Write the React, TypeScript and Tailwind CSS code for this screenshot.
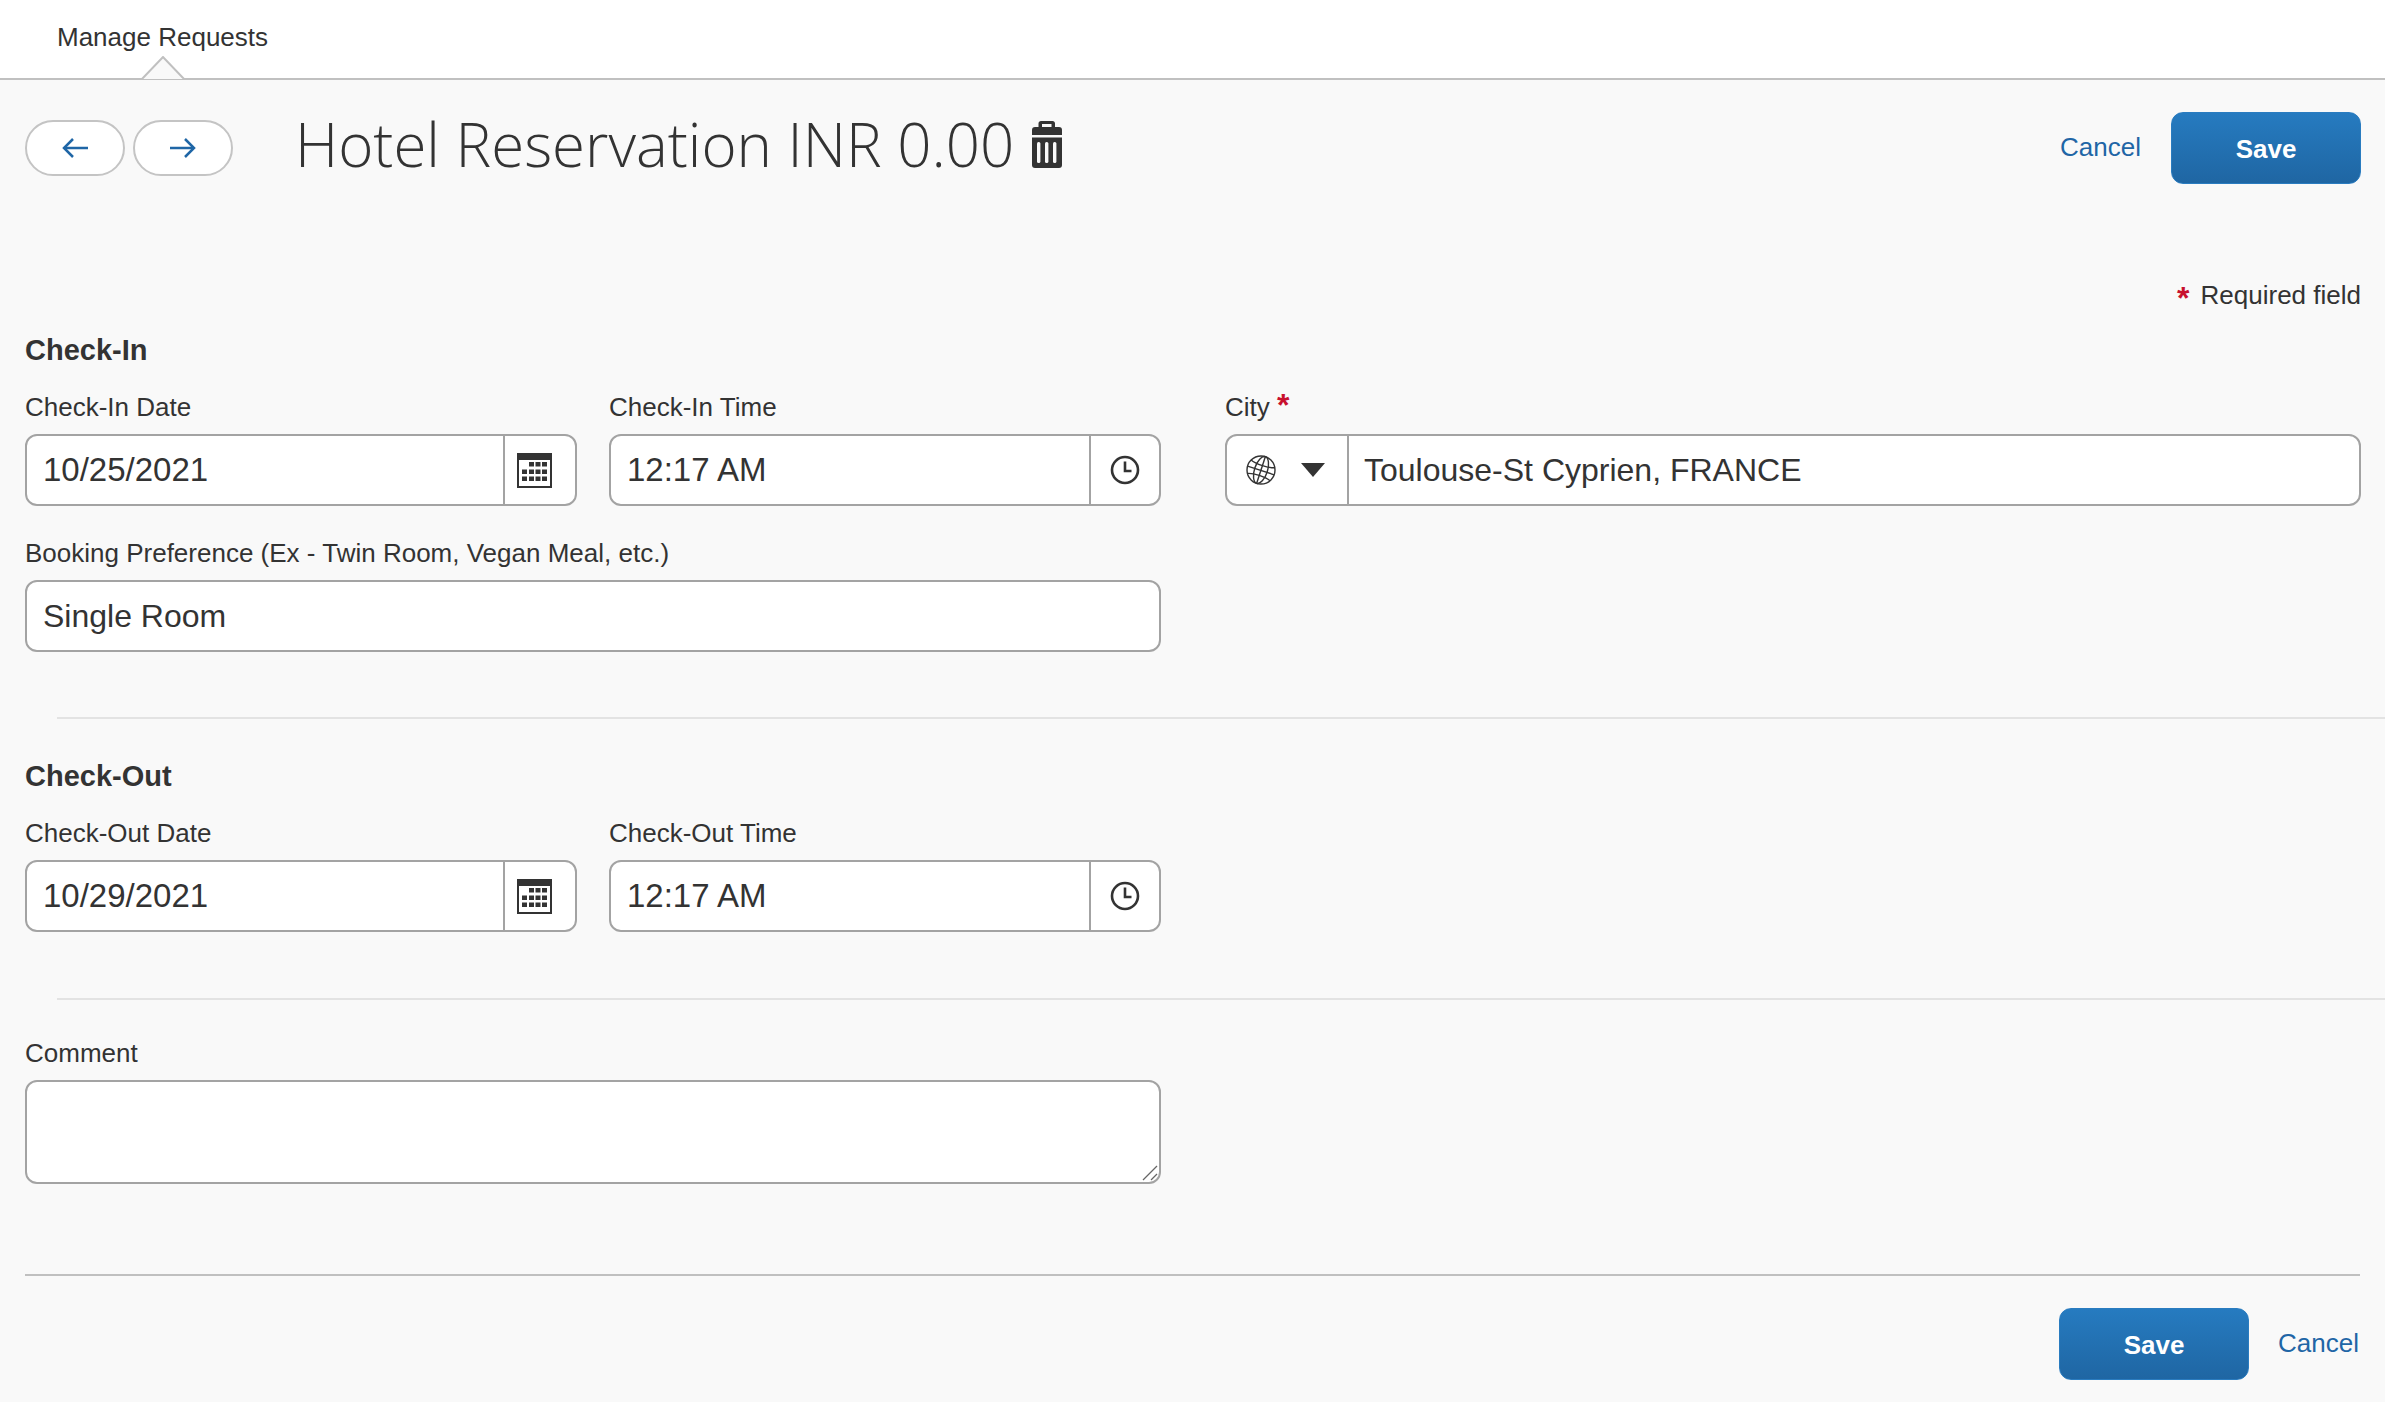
import { ReactNode } from "react";

const sans = "font-['Liberation_Sans',Arial,sans-serif]";

function CalendarIcon() {
  return (
    <svg width="35" height="35" viewBox="0 0 35 35" className="block">
      <rect x="0" y="0" width="35" height="35" fill="#333" />
      <rect x="2" y="7" width="31" height="26" fill="#fff" />
      {[9, 16.500, 23.500].map((y) =>
        [5, 12, 18.500, 25].map((x) =>
          y === 9 && x === 5 ? null : <rect key={`${x}-${y}`} x={x} y={y} width="5" height="4.500" fill="#333" />
        )
      )}
    </svg>
  );
}

function ClockIcon() {
  return (
    <svg width="30" height="30" viewBox="0 0 30 30" className="block">
      <circle cx="15" cy="15" r="13" fill="none" stroke="#333" strokeWidth="2.600" />
      <path d="M15 6.500V16H21.500" fill="none" stroke="#333" strokeWidth="2.600" />
    </svg>
  );
}

function GlobeIcon() {
  return (
    <svg width="30" height="30" viewBox="0 0 30 30" className="block" fill="none" stroke="#333" strokeWidth="1.400">
      <circle cx="15" cy="15" r="14" />
      <g transform="rotate(18 15 15)">
        <ellipse cx="15" cy="15" rx="6.500" ry="14" />
        <path d="M15 1V29" />
        <path d="M2.500 8.500C8 11 22 11 27.500 8.500" />
        <path d="M1 15.500H29" />
        <path d="M3 22.500C9 20 21 20 27 22.500" />
      </g>
    </svg>
  );
}

function TrashIcon() {
  return (
    <svg width="30" height="47" viewBox="0 0 30 47" className="block">
      <path d="M9 0H20.500C22 0 23 1 23 2.500V6H27C29 6 30 7 30 9V14H0V9C0 7 1 6 3 6H6.500V2.500C6.500 1 7.500 0 9 0ZM10 3V6H19.500V3Z" fill="#333" fillRule="evenodd" />
      <path d="M0 16.500H30V44C30 46 29 47 27 47H3C1 47 0 46 0 44Z" fill="#333" />
      <rect x="5" y="21" width="3.400" height="21" rx="1.500" fill="#f9f9f9" />
      <rect x="13" y="21" width="3.400" height="21" rx="1.500" fill="#f9f9f9" />
      <rect x="21" y="21" width="3.400" height="21" rx="1.500" fill="#f9f9f9" />
    </svg>
  );
}

function ArrowIcon({ flip }: { flip?: boolean }) {
  return (
    <svg width="26" height="20" viewBox="0 0 26 20" className={flip ? "block rotate-180" : "block"} fill="none" stroke="#1f66a6" strokeWidth="2.500">
      <path d="M26 10H2" />
      <path d="M11 1L2 10L11 19" />
    </svg>
  );
}

function Label({ children }: { children: ReactNode }) {
  return <div className="h-[28px] text-[26px] leading-[28px] text-[#333] whitespace-nowrap">{children}</div>;
}

function Field({ label, value, icon, width }: { label: string; value: string; icon: ReactNode; width: string }) {
  return (
    <div className={width}>
      <Label>{label}</Label>
      <div className="mt-[13px] flex h-[72px] rounded-[12px] border-2 border-[#a3a3a3] bg-white">
        <div className="flex-1 pl-[16px] text-[33px] leading-[68px] text-[#333]">{value}</div>
        {icon}
      </div>
    </div>
  );
}

function DateTimeRow({ dateLabel, timeLabel, date }: { dateLabel: string; timeLabel: string; date: string }) {
  return (
    <>
      <Field
        label={dateLabel}
        value={date}
        width="w-[552px]"
        icon={
          <div className="flex w-[72px] items-center justify-start border-l-2 border-[#a3a3a3] pl-[12px]">
            <CalendarIcon />
          </div>
        }
      />
      <Field
        label={timeLabel}
        value="12:17 AM"
        width="w-[552px]"
        icon={
          <div className="flex w-[70px] items-center justify-center border-l-2 border-[#a3a3a3]">
            <ClockIcon />
          </div>
        }
      />
    </>
  );
}

function SaveButton() {
  return (
    <button className="h-[72px] w-[190px] rounded-[12px] border border-[#2a7cc0] bg-gradient-to-b from-[#267bc0] to-[#1f66a3] pt-[2px] text-[26px] font-bold text-white">
      Save
    </button>
  );
}

export default function App() {
  return (
    <div className={`min-h-[1402px] bg-[#f9f9f9] ${sans}`}>
      <div className="relative h-[80px] border-b-2 border-[#c0c0c0] bg-white pl-[57px] pt-[22px] text-[26px] leading-[30px] text-[#333]">
        Manage Requests
        <svg width="44" height="24" viewBox="0 0 44 24" className="absolute bottom-[-2px] left-[141px]">
          <path d="M0 23H1L22 1L43 23H44" fill="#f9f9f9" stroke="#c0c0c0" strokeWidth="2" />
        </svg>
      </div>

      <div className="flex items-center justify-between pl-[25px] pr-[24px] pt-[32px]">
        <div className="flex items-center">
          <button className="flex h-[56px] w-[100px] items-center justify-center rounded-full border-2 border-[#c4c4c4] bg-white">
            <ArrowIcon />
          </button>
          <button className="ml-[8px] flex h-[56px] w-[100px] items-center justify-center rounded-full border-2 border-[#c4c4c4] bg-white">
            <ArrowIcon flip />
          </button>
          <h1 className="-mt-[9px] ml-[62px] font-['Open_Sans',sans-serif] text-[60px] font-light leading-[72px] text-[#333]">
            Hotel Reservation INR 0.00
          </h1>
          <div className="-mt-[8px] ml-[18px]">
            <TrashIcon />
          </div>
        </div>
        <div className="flex items-center gap-[30px]">
          <a className="mb-[2px] text-[26px] text-[#1f66a6]">Cancel</a>
          <SaveButton />
        </div>
      </div>

      <div className="mt-[96px] flex justify-end pr-[24px] text-[26px] leading-[30px] text-[#333]">
        <span className="mr-[11px] translate-y-[3px] text-[32px] font-bold text-[#c8102e]">*</span>
        Required field
      </div>

      <div className="px-[25px]">
        <h2 className="mt-[24px] text-[29px] font-bold leading-[32px] text-[#333]">Check-In</h2>

        <div className="mt-[27px] grid grid-cols-[552px_552px_1168px] gap-x-[32px]">
          <DateTimeRow dateLabel="Check-In Date" timeLabel="Check-In Time" date="10/25/2021" />
          <div className="ml-[32px]">
            <Label>
              City <span className="text-[32px] font-bold leading-[20px] text-[#c8102e]">*</span>
            </Label>
            <div className="mt-[13px] flex h-[72px] rounded-[12px] border-2 border-[#a3a3a3] bg-white">
              <div className="flex w-[122px] items-center border-r-2 border-[#a3a3a3] pl-[19px]">
                <GlobeIcon />
                <div className="ml-[25px] h-0 w-0 border-x-[12px] border-t-[14px] border-x-transparent border-t-[#333]" />
              </div>
              <div className="pl-[15px] text-[32px] leading-[68px] text-[#333]">Toulouse-St Cyprien, FRANCE</div>
            </div>
          </div>
        </div>

        <div className="mt-[33px] w-[1136px]">
          <Label>Booking Preference (Ex - Twin Room, Vegan Meal, etc.)</Label>
          <div className="mt-[13px] h-[72px] rounded-[12px] border-2 border-[#a3a3a3] bg-white pl-[16px] text-[32px] leading-[68px] text-[#333]">
            Single Room
          </div>
        </div>
      </div>

      <div className="ml-[57px] mt-[65px] h-[2px] bg-[#e3e3e3]" />

      <div className="px-[25px]">
        <h2 className="mt-[41px] text-[29px] font-bold leading-[32px] text-[#333]">Check-Out</h2>
        <div className="mt-[27px] grid grid-cols-[552px_552px] gap-x-[32px]">
          <DateTimeRow dateLabel="Check-Out Date" timeLabel="Check-Out Time" date="10/29/2021" />
        </div>
      </div>

      <div className="ml-[57px] mt-[66px] h-[2px] bg-[#e3e3e3]" />

      <div className="px-[25px]">
        <div className="mt-[39px]">
          <Label>Comment</Label>
        </div>
        <div className="relative mt-[13px] h-[104px] w-[1136px] rounded-[12px] border-2 border-[#a3a3a3] bg-white">
          <svg width="16" height="16" viewBox="0 0 16 16" className="absolute bottom-[1px] right-[1px]" fill="none" stroke="#666" strokeWidth="1.300">
            <path d="M1 15L15 1" />
            <path d="M9 15L15 9" />
          </svg>
        </div>
        <div className="mt-[90px] h-[2px] bg-[#c0c0c0]" />
        <div className="mt-[32px] flex items-center justify-end pr-[1px]">
          <SaveButton />
          <a className="mb-[2px] ml-[29px] text-[26px] text-[#1f66a6]">Cancel</a>
        </div>
      </div>
    </div>
  );
}
